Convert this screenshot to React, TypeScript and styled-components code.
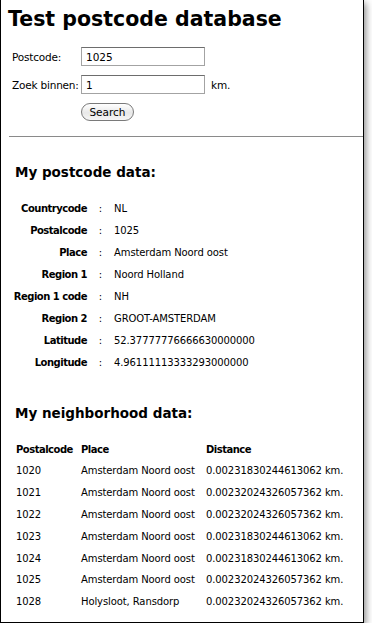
import React from 'react'
import styled, { createGlobalStyle } from 'styled-components'

const GlobalStyle = createGlobalStyle`
  html, body {
    margin: 0;
    padding: 0;
    background: #fff;
  }
  body {
    font-family: 'DejaVu Sans', Verdana, sans-serif;
    color: #000;
  }
`

const Frame = styled.div`
  width: 364px;
  height: 623px;
  box-sizing: border-box;
  border: 1px solid #000;
  border-top: none;
  box-shadow: 2px 3px 7px rgba(0, 0, 0, 0.45);
  overflow: hidden;
  background: #fff;
`

const Title = styled.h1`
  font-size: 20.5px;
  font-weight: bold;
  margin: 6px 0 0 7px;
  line-height: 26px;
`

const SearchForm = styled.form`
  display: grid;
  grid-template-columns: 63px 124px auto;
  column-gap: 6px;
  row-gap: 9px;
  align-items: center;
  margin: 15px 0 0 11px;
  font-size: 10.5px;
  letter-spacing: -0.2px;
  white-space: nowrap;
`

const Field = styled.input`
  width: 124px;
  height: 19px;
  box-sizing: border-box;
  border: 1px solid #a3a3a3;
  border-top-color: #6d6d6d;
  font-family: inherit;
  font-size: 10.5px;
  padding: 0 4px;
  margin: 0;
`

const Button = styled.button`
  grid-column: 2;
  justify-self: start;
  height: 18px;
  width: 53px;
  padding: 0;
  border: 1px solid #7a7a7a;
  border-radius: 9px;
  background: linear-gradient(#fff, #e8e8e8 55%, #f6f6f6);
  font-family: inherit;
  font-size: 10.5px;
  color: #000;
`

const Rule = styled.hr`
  border: none;
  border-top: 1px solid #8a8a8a;
  margin: 15px 0 0 8px;
`

const SectionTitle = styled.h2<{ $top: number }>`
  font-size: 13.5px;
  font-weight: bold;
  margin: ${({ $top }) => $top}px 0 0 14px;
  line-height: 20px;
`

const DataTable = styled.table`
  border-collapse: collapse;
  margin: 15px 0 0 4px;
  font-size: 10px;
  letter-spacing: -0.1px;

  td {
    height: 22px;
    padding: 0;
    white-space: nowrap;
  }
`

const Key = styled.td`
  text-align: right;
  font-weight: bold;
  letter-spacing: -0.5px;
  width: 82px;
`

const Sep = styled.td`
  width: 27px;
  text-align: center;
`

const NearTable = styled.table`
  border-collapse: collapse;
  margin: 15px 0 0 15px;
  font-size: 10px;
  letter-spacing: -0.1px;

  th, td {
    height: 22px;
    padding: 0;
    text-align: left;
    white-space: nowrap;
  }
  tbody td {
    height: 21.8px;
  }
  th {
    font-weight: bold;
    letter-spacing: -0.5px;
  }
`

const Col = styled.th<{ $w: number }>`
  width: ${({ $w }) => $w}px;
`

const postcode: [string, string][] = [
  ['Countrycode', 'NL'],
  ['Postalcode', '1025'],
  ['Place', 'Amsterdam Noord oost'],
  ['Region 1', 'Noord Holland'],
  ['Region 1 code', 'NH'],
  ['Region 2', 'GROOT-AMSTERDAM'],
  ['Latitude', '52.37777776666630000000'],
  ['Longitude', '4.96111113333293000000'],
]

const neighbours: [string, string, string][] = [
  ['1020', 'Amsterdam Noord oost', '0.00231830244613062 km.'],
  ['1021', 'Amsterdam Noord oost', '0.00232024326057362 km.'],
  ['1022', 'Amsterdam Noord oost', '0.00232024326057362 km.'],
  ['1023', 'Amsterdam Noord oost', '0.00231830244613062 km.'],
  ['1024', 'Amsterdam Noord oost', '0.00231830244613062 km.'],
  ['1025', 'Amsterdam Noord oost', '0.00232024326057362 km.'],
  ['1028', 'Holysloot, Ransdorp', '0.00232024326057362 km.'],
]

export default function App() {
  return (
    <>
      <GlobalStyle />
      <Frame>
        <Title>Test postcode database</Title>
        <SearchForm onSubmit={(e) => e.preventDefault()}>
          <span>Postcode:</span>
          <Field defaultValue="1025" />
          <span />
          <span>Zoek binnen:</span>
          <Field defaultValue="1" />
          <span>km.</span>
          <Button type="submit">Search</Button>
        </SearchForm>
        <Rule />
        <SectionTitle $top={25}>My postcode data:</SectionTitle>
        <DataTable>
          <tbody>
            {postcode.map(([k, v]) => (
              <tr key={k}>
                <Key>{k}</Key>
                <Sep>:</Sep>
                <td>{v}</td>
              </tr>
            ))}
          </tbody>
        </DataTable>
        <SectionTitle $top={30}>My neighborhood data:</SectionTitle>
        <NearTable>
          <thead>
            <tr>
              <Col $w={65}>Postalcode</Col>
              <Col $w={125}>Place</Col>
              <th>Distance</th>
            </tr>
          </thead>
          <tbody>
            {neighbours.map(([code, place, dist]) => (
              <tr key={code}>
                <td>{code}</td>
                <td>{place}</td>
                <td>{dist}</td>
              </tr>
            ))}
          </tbody>
        </NearTable>
      </Frame>
    </>
  )
}
